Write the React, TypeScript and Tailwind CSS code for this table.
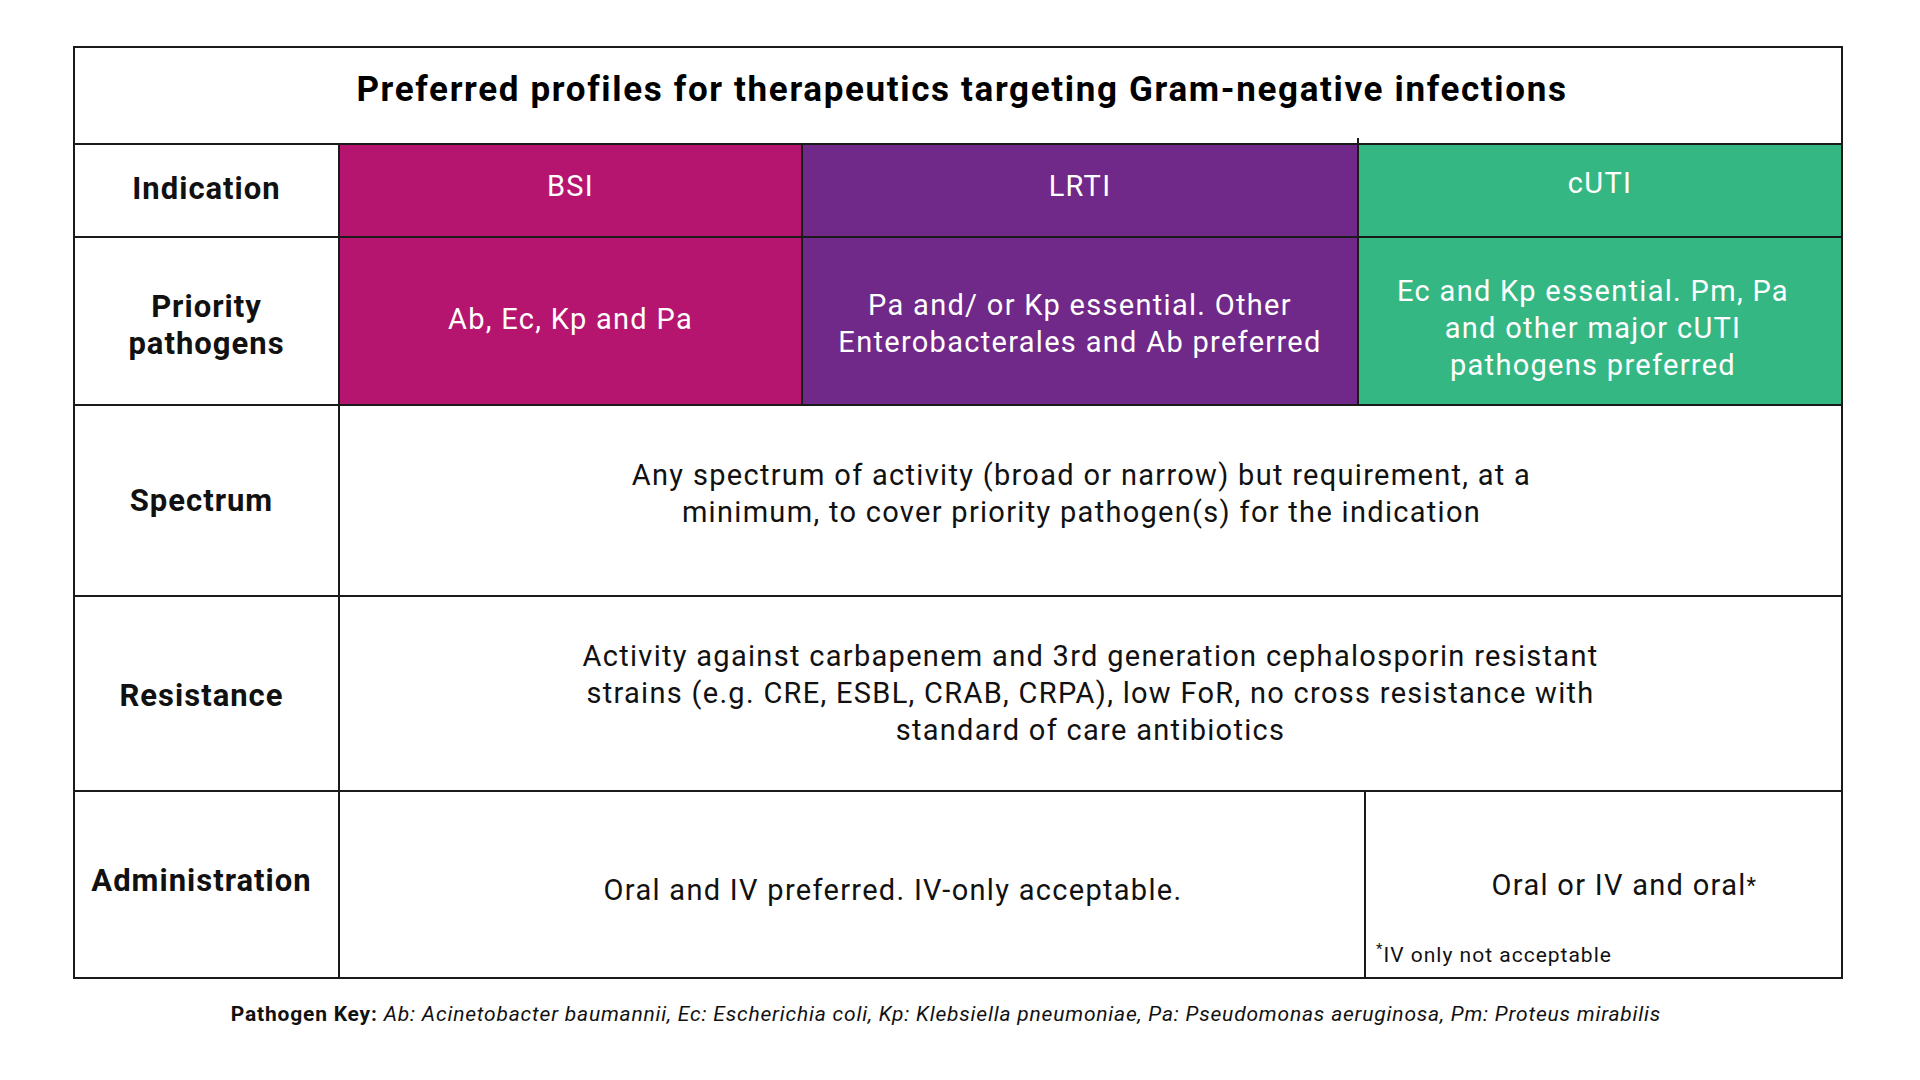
import React from 'react';

const font = { fontFamily: 'Roboto, "Liberation Sans", Arial, sans-serif' };

function Label({ children, className = '' }: { children: React.ReactNode; className?: string }) {
  return (
    <div
      className={`bg-white flex items-center justify-center text-center text-[31px] leading-[37px] tracking-[1px] font-bold text-[#111] ${className}`}
    >
      {children}
    </div>
  );
}

export default function App() {
  return (
    <div style={font} className="w-[1920px] h-[1080px] bg-white pt-[46px] pl-[73px]">
      <div className="w-[1770px] flex flex-col gap-[2px] bg-[#1a1a1a] p-[2px]">
        {/* title */}
        <div className="relative h-[95px] bg-white flex items-center justify-center pb-[10px]">
          <h1 className="text-[35px] font-bold text-black tracking-[1.65px] ml-[8px]">
            Preferred profiles for therapeutics targeting Gram-negative infections
          </h1>
          <span className="absolute left-[1282px] bottom-0 w-[2px] h-[5px] bg-[#1a1a1a]" />
        </div>

        {/* indication */}
        <div className="grid grid-cols-[263px_461px_554px_482px] gap-[2px] h-[91px] text-[29px] tracking-[1.3px]">
          <Label className="pb-[4px]">Indication</Label>
          <div className="bg-[#b5156e] text-white flex items-center justify-center pb-[8px]">BSI</div>
          <div className="bg-[#702889] text-white flex items-center justify-center pb-[8px]">LRTI</div>
          <div className="bg-[#35b783] text-white flex items-center justify-center pb-[14px]">cUTI</div>
        </div>

        {/* priority pathogens */}
        <div className="grid grid-cols-[263px_461px_554px_482px] gap-[2px] h-[166px] text-[29px] leading-[37px] tracking-[1.3px]">
          <Label className="pt-[8px]">
            Priority
            <br />
            pathogens
          </Label>
          <div className="bg-[#b5156e] text-white flex items-center justify-center text-center px-4 pb-[4px]">
            Ab, Ec, Kp and Pa
          </div>
          <div className="bg-[#702889] text-white flex items-center justify-center text-center px-2 pt-[6px]">
            Pa and/ or Kp essential. Other
            <br />
            Enterobacterales and Ab preferred
          </div>
          <div className="bg-[#35b783] text-white flex items-center justify-center text-center pr-[14px] pt-[14px]">
            Ec and Kp essential. Pm, Pa
            <br />
            and other major cUTI
            <br />
            pathogens preferred
          </div>
        </div>

        {/* spectrum */}
        <div className="grid grid-cols-[263px_1fr] gap-[2px] h-[189px]">
          <Label className="pr-[10px]">Spectrum</Label>
          <div className="bg-white flex items-center justify-center text-center text-[29px] leading-[37px] tracking-[1.3px] text-[#111] pb-[14px] pr-[18px]">
            Any spectrum of activity (broad or narrow) but requirement, at a
            <br />
            minimum, to cover priority pathogen(s) for the indication
          </div>
        </div>

        {/* resistance */}
        <div className="grid grid-cols-[263px_1fr] gap-[2px] h-[193px]">
          <Label className="pr-[10px] pt-[4px]">Resistance</Label>
          <div className="bg-white flex items-center justify-center text-center text-[29px] leading-[37px] tracking-[1.3px] text-[#111]">
            Activity against carbapenem and 3rd generation cephalosporin resistant
            <br />
            strains (e.g. CRE, ESBL, CRAB, CRPA), low FoR, no cross resistance with
            <br />
            standard of care antibiotics
          </div>
        </div>

        {/* administration */}
        <div className="grid grid-cols-[263px_1024px_475px] gap-[2px] h-[185px]">
          <Label className="pr-[10px] pb-[8px]">Administration</Label>
          <div className="bg-white flex items-center justify-center text-[29px] tracking-[1.3px] text-[#111] pl-[82px] pt-[12px]">
            Oral and IV preferred. IV-only acceptable.
          </div>
          <div className="bg-white flex flex-col text-[#111]">
            <div className="flex-1 flex items-center justify-center text-[29px] tracking-[1.3px] pl-[42px] pt-[40px]">
              <span>
                Oral or IV and oral<sup className="text-[22px] relative -top-[2px]">*</sup>
              </span>
            </div>
            <div className="text-[21px] tracking-[1px] pl-[10px] pb-[6px]">
              <sup className="text-[15px]">*</sup>IV only not acceptable
            </div>
          </div>
        </div>
      </div>

      <p className="w-[1770px] text-center text-[21px] tracking-[0.8px] text-[#111] mt-[20px] pr-[24px]">
        <span className="font-bold">Pathogen Key:</span>{' '}
        <span className="italic">
          Ab: Acinetobacter baumannii, Ec: Escherichia coli, Kp: Klebsiella pneumoniae, Pa: Pseudomonas aeruginosa, Pm: Proteus mirabilis
        </span>
      </p>
    </div>
  );
}
